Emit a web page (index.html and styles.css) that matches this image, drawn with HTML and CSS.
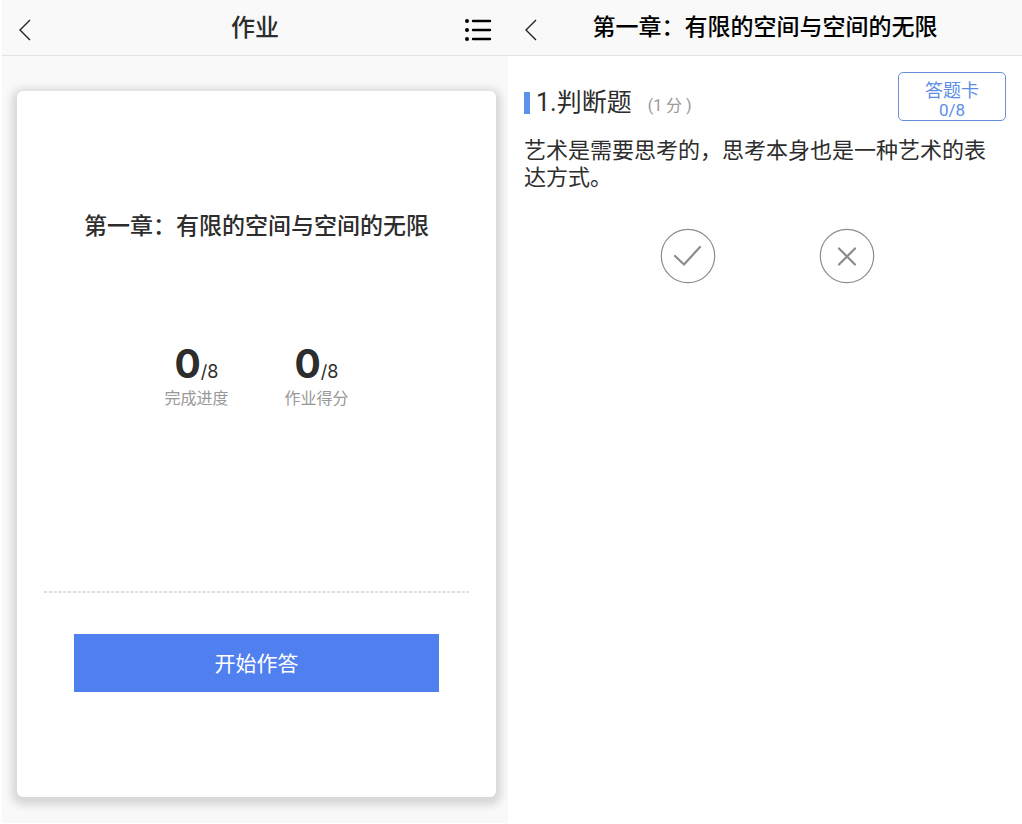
FILE: index.html
```html
<!DOCTYPE html>
<html lang="zh-CN">
<head>
  <meta charset="UTF-8">
  <meta name="viewport" content="width=device-width, initial-scale=1.0">
  <title>作业</title>
  <link rel="stylesheet" href="styles.css">
</head>
<body>
  <div class="page">
    <section class="panel homework">
      <header class="topbar">
        <button class="icon-btn" type="button" aria-label="返回">
          <svg width="14" height="24" viewBox="0 0 14 24"><path d="M13 2 L3 12 L13 22" fill="none" stroke="#222" stroke-width="1.4"/></svg>
        </button>
        <h1>作业</h1>
        <button class="icon-btn" type="button" aria-label="目录">
          <svg width="28" height="24" viewBox="0 0 28 24">
            <g fill="#000"><circle cx="3" cy="3" r="2"/><circle cx="3" cy="12" r="2"/><circle cx="3" cy="21" r="2"/></g>
            <path d="M9 3 H26 M9 12 H26 M9 21 H26" stroke="#000" stroke-width="2.4" stroke-linecap="round"/>
          </svg>
        </button>
      </header>
      <div class="card">
        <h2>第一章：有限的空间与空间的无限</h2>
        <div class="stats">
          <div class="stat">
            <p class="num"><b>0</b>/8</p>
            <p class="label">完成进度</p>
          </div>
          <div class="stat">
            <p class="num"><b>0</b>/8</p>
            <p class="label">作业得分</p>
          </div>
        </div>
        <svg class="divider" height="2"><line x1="0" y1="1" x2="100%" y2="1" stroke="#d4d4d4" stroke-width="1.4" stroke-dasharray="3.2 1.6"/></svg>
        <button class="start" type="button">开始作答</button>
      </div>
    </section>

    <section class="panel question">
      <header class="topbar">
        <button class="icon-btn" type="button" aria-label="返回">
          <svg width="14" height="24" viewBox="0 0 14 24"><path d="M13 2 L3 12 L13 22" fill="none" stroke="#222" stroke-width="1.4"/></svg>
        </button>
        <h1>第一章：有限的空间与空间的无限</h1>
      </header>
      <div class="content">
        <div class="question-head">
          <h2>1.判断题</h2>
          <span class="score">(1 分 )</span>
          <button class="sheet" type="button">
            <span>答题卡</span>
            <span class="count">0/8</span>
          </button>
        </div>
        <p class="text">艺术是需要思考的，思考本身也是一种艺术的表达方式。</p>
        <div class="answers">
          <button type="button" aria-label="正确">
            <svg width="56" height="56" viewBox="0 0 56 56" fill="none" stroke="#8c8c8c">
              <circle cx="28" cy="28" r="26.7" stroke-width="1.2"/>
              <path d="M15 28 L24 36.500 L40 19" stroke-width="2.200" stroke-linecap="round"/>
            </svg>
          </button>
          <button type="button" aria-label="错误">
            <svg width="56" height="56" viewBox="0 0 56 56" fill="none" stroke="#8c8c8c">
              <circle cx="28" cy="28" r="26.7" stroke-width="1.2"/>
              <path d="M20 20.500 L36 36.500 M36 20.500 L20 36.500" stroke-width="2.200" stroke-linecap="round"/>
            </svg>
          </button>
        </div>
      </div>
    </section>
  </div>
</body>
</html>
```
FILE: styles.css
```css
* {
  box-sizing: border-box;
}

body {
  margin: 0;
  font-family: Roboto, "Noto Sans CJK SC", sans-serif;
  color: #2d2d2d;
  background-color: #fff;
}

h1, h2, p {
  margin: 0;
}

h1, h2 {
  font-weight: 500;
}

button {
  font-family: inherit;
  padding: 0;
  border: none;
  background: none;
  cursor: pointer;
}

svg {
  display: block;
}

.page {
  display: grid;
  grid-template-columns: 506fr 514fr;
  min-height: 100vh;
  padding: 0 0 1px 2px;
}

.panel {
  display: flex;
  flex-direction: column;
}

.topbar {
  display: grid;
  grid-template-columns: 44px 1fr 44px;
  align-items: center;
  height: 56px;
  background-color: #f9f9f9;
  border-bottom: 1px solid #e2e2e2;
}

.topbar h1 {
  font-size: 24px;
  line-height: 54px;
  text-align: center;
}

.icon-btn {
  display: flex;
  padding: 4px 0 0 15px;
}

.icon-btn:last-child {
  padding-left: 0;
}

.homework {
  background-color: #f9f9f9;
  overflow: hidden;
}

.card {
  flex: 1;
  display: flex;
  flex-direction: column;
  margin: 35px 12px 26px 15px;
  padding: 116px 27px 105px;
  background-color: #fff;
  border-radius: 6px;
  box-shadow: 0 3px 9px 5px rgba(0, 0, 0, 0.14);
}

.card h2 {
  font-size: 23px;
  line-height: 40px;
  text-align: center;
}

.stats {
  display: flex;
  justify-content: center;
  gap: 56px;
  margin-top: 102px;
}

.stat {
  text-align: center;
}

.num {
  font-family: Inter, sans-serif;
  font-size: 18px;
  line-height: 30px;
}

.num b {
  font-size: 39px;
}

.label {
  font-size: 16px;
  line-height: 24px;
  color: #999;
}

.divider {
  width: 100%;
  margin-top: auto;
}

.start {
  height: 58px;
  margin: 41px 30px 0;
  padding-bottom: 2px;
  font-size: 21px;
  color: #fff;
  background-color: #5080ef;
}

.question .topbar h1 {
  font-size: 23px;
  color: #000;
}

.content {
  padding: 16px 16px 0;
}

.question-head {
  display: flex;
  align-items: flex-end;
}

.question-head h2 {
  margin-bottom: 7px;
  padding-left: 6px;
  font-size: 25px;
  line-height: 22px;
  font-weight: 400;
  border-left: 6px solid #5d92ea;
}

.score {
  margin: 0 0 5px 16px;
  font-size: 16px;
  line-height: 20px;
  color: #999;
}

.sheet {
  display: flex;
  flex-direction: column;
  align-items: center;
  width: 108px;
  height: 49px;
  margin-left: auto;
  padding-top: 8px;
  font-size: 18px;
  line-height: 20px;
  color: #5d8ee6;
  border: 1px solid #6690e0;
  border-radius: 5px;
}

.count {
  font-size: 17px;
  line-height: 18px;
}

.text {
  margin-top: 16px;
  font-size: 22px;
  line-height: 27px;
}

.answers {
  display: flex;
  justify-content: center;
  gap: 103px;
  margin: 37px 0 0 4px;
}
```
